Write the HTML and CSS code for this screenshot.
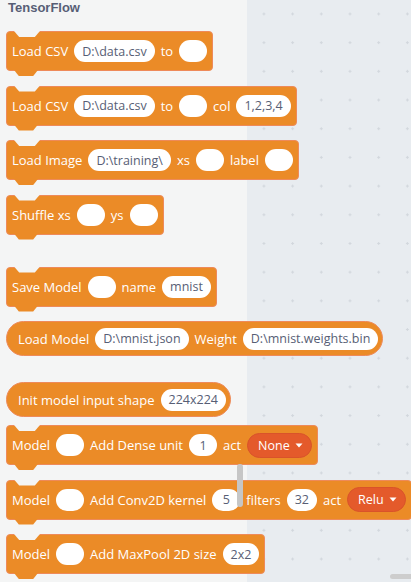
FILE: index.html
```html
<!DOCTYPE html>
<html>
<head>
<meta charset="utf-8">
<link rel="stylesheet" href="styles.css">
</head>
<body>
<div class="stage">
  <div class="palette">
    <div class="title">TensorFlow</div>

    <div class="block stack first">
      <span class="lbl">Load CSV</span><span class="pill">D:\data.csv</span><span class="lbl">to</span><span class="pill empty"></span>
    </div>

    <div class="block stack">
      <span class="lbl">Load CSV</span><span class="pill">D:\data.csv</span><span class="lbl">to</span><span class="pill empty"></span><span class="lbl">col</span><span class="pill">1,2,3,4</span>
    </div>

    <div class="block stack">
      <span class="lbl">Load Image</span><span class="pill">D:\training\</span><span class="lbl">xs</span><span class="pill empty"></span><span class="lbl">label</span><span class="pill empty"></span>
    </div>

    <div class="block stack">
      <span class="lbl">Shuffle xs</span><span class="pill empty"></span><span class="lbl">ys</span><span class="pill empty"></span>
    </div>

    <div class="block stack gap-xl">
      <span class="lbl">Save Model</span><span class="pill empty"></span><span class="lbl">name</span><span class="pill">mnist</span>
    </div>

    <div class="block reporter">
      <span class="lbl">Load Model</span><span class="pill">D:\mnist.json</span><span class="lbl">Weight</span><span class="pill">D:\mnist.weights.bin</span>
    </div>

    <div class="block reporter gap-lg">
      <span class="lbl">Init model input shape</span><span class="pill">224x224</span>
    </div>

    <div class="block stack gap-sm">
      <span class="lbl">Model</span><span class="pill empty"></span><span class="lbl">Add Dense unit</span><span class="pill num">1</span><span class="lbl">act</span><span class="dropdown">None<svg class="caret" width="8" height="5" viewBox="0 0 8 5"><path d="M0.5 0.5 L7.5 0.5 L4 4.5 Z" fill="#ffffff"/></svg></span>
    </div>

    <div class="block stack">
      <span class="lbl">Model</span><span class="pill empty"></span><span class="lbl">Add Conv2D kernel</span><span class="pill num">5</span><span class="lbl">filters</span><span class="pill num">32</span><span class="lbl">act</span><span class="dropdown">Relu<svg class="caret" width="8" height="5" viewBox="0 0 8 5"><path d="M0.5 0.5 L7.5 0.5 L4 4.5 Z" fill="#ffffff"/></svg></span>
    </div>

    <div class="block stack">
      <span class="lbl">Model</span><span class="pill empty"></span><span class="lbl">Add MaxPool 2D size</span><span class="pill">2x2</span>
    </div>
  </div>

  <div class="vscroll"></div>
  <div class="hscroll"></div>
</div>
</body>
</html>
```

FILE: styles.css
```css
html, body {
  margin: 0;
  padding: 0;
}

body {
  width: 411px;
  height: 582px;
  overflow: hidden;
  font-family: "Open Sans", "Noto Sans", "Liberation Sans", sans-serif;
}

.stage {
  position: relative;
  width: 411px;
  height: 582px;
  overflow: hidden;
  background-color: #e8ecf0;
  background-image:
    linear-gradient(to right, #f4f5f5 0, #f4f5f5 247px, transparent 247px),
    radial-gradient(circle at center, #d2d7dd 0, #d2d7dd 1px, transparent 1.4px);
  background-size: 100% 100%, 28.7px 28.7px;
  background-position: 0 0, -8.6px -0.4px;
  background-repeat: no-repeat, repeat;
}

.palette {
  display: flex;
  flex-direction: column;
  align-items: flex-start;
  padding-left: 6px;
}

.title {
  font-family: "Liberation Sans", Arial, sans-serif;
  font-weight: bold;
  font-size: 13px;
  line-height: 16px;
  color: #575e75;
  padding-left: 2px;
  height: 16px;
}

.block {
  position: relative;
  display: flex;
  align-items: center;
  gap: 6px;
  box-sizing: border-box;
  background: #eb8b27;
  border: 1px solid #ee8a5a;
  color: #ffffff;
  font-size: 13px;
  white-space: nowrap;
  margin-top: 14.5px;
}

.block.first { margin-top: 15px; }
.block.gap-xl { margin-top: 32px; }
.block.gap-lg { margin-top: 26px; }
.block.gap-sm { margin-top: 8px; }

.stack {
  height: 40px;
  border-radius: 4px;
  padding: 0 5px;
}

/* notch cut into top edge */
.stack::before {
  content: "";
  position: absolute;
  top: -1px;
  left: 7px;
  width: 26px;
  height: 6px;
  background: #f4f5f5;
  clip-path: polygon(0 0, 100% 0, 80% 100%, 20% 100%);
}

/* tab on the bottom edge */
.stack::after {
  content: "";
  position: absolute;
  top: 100%;
  left: 7px;
  width: 24px;
  height: 6px;
  background: #eb8b27;
  clip-path: polygon(0 0, 100% 0, 80% 100%, 20% 100%);
}

.reporter {
  height: 35px;
  border-radius: 18px;
  padding: 0 4px 0 11px;
}

.lbl {
  line-height: 16px;
}

.pill {
  display: inline-flex;
  align-items: center;
  justify-content: center;
  box-sizing: border-box;
  height: 22px;
  min-width: 28px;
  padding: 0 8px;
  border-radius: 11px;
  background: #ffffff;
  color: #575e75;
  font-size: 12.5px;
}

.pill.empty { width: 28px; padding: 0; }

.dropdown {
  display: inline-flex;
  align-items: center;
  gap: 5px;
  box-sizing: border-box;
  height: 25px;
  padding: 0 8px 0 10px;
  border-radius: 13px;
  background: #e45a2b;
  border: 1px solid #d9532a;
  color: #ffffff;
  font-size: 12.5px;
}

.caret { display: block; }

.vscroll {
  position: absolute;
  left: 237px;
  top: 464px;
  width: 6px;
  height: 43px;
  border-radius: 3px;
  background: #c6c6c6;
}

.hscroll {
  position: absolute;
  left: 390px;
  top: 574px;
  width: 30px;
  height: 5px;
  border-radius: 3px;
  background: #cdcdcd;
}
```
